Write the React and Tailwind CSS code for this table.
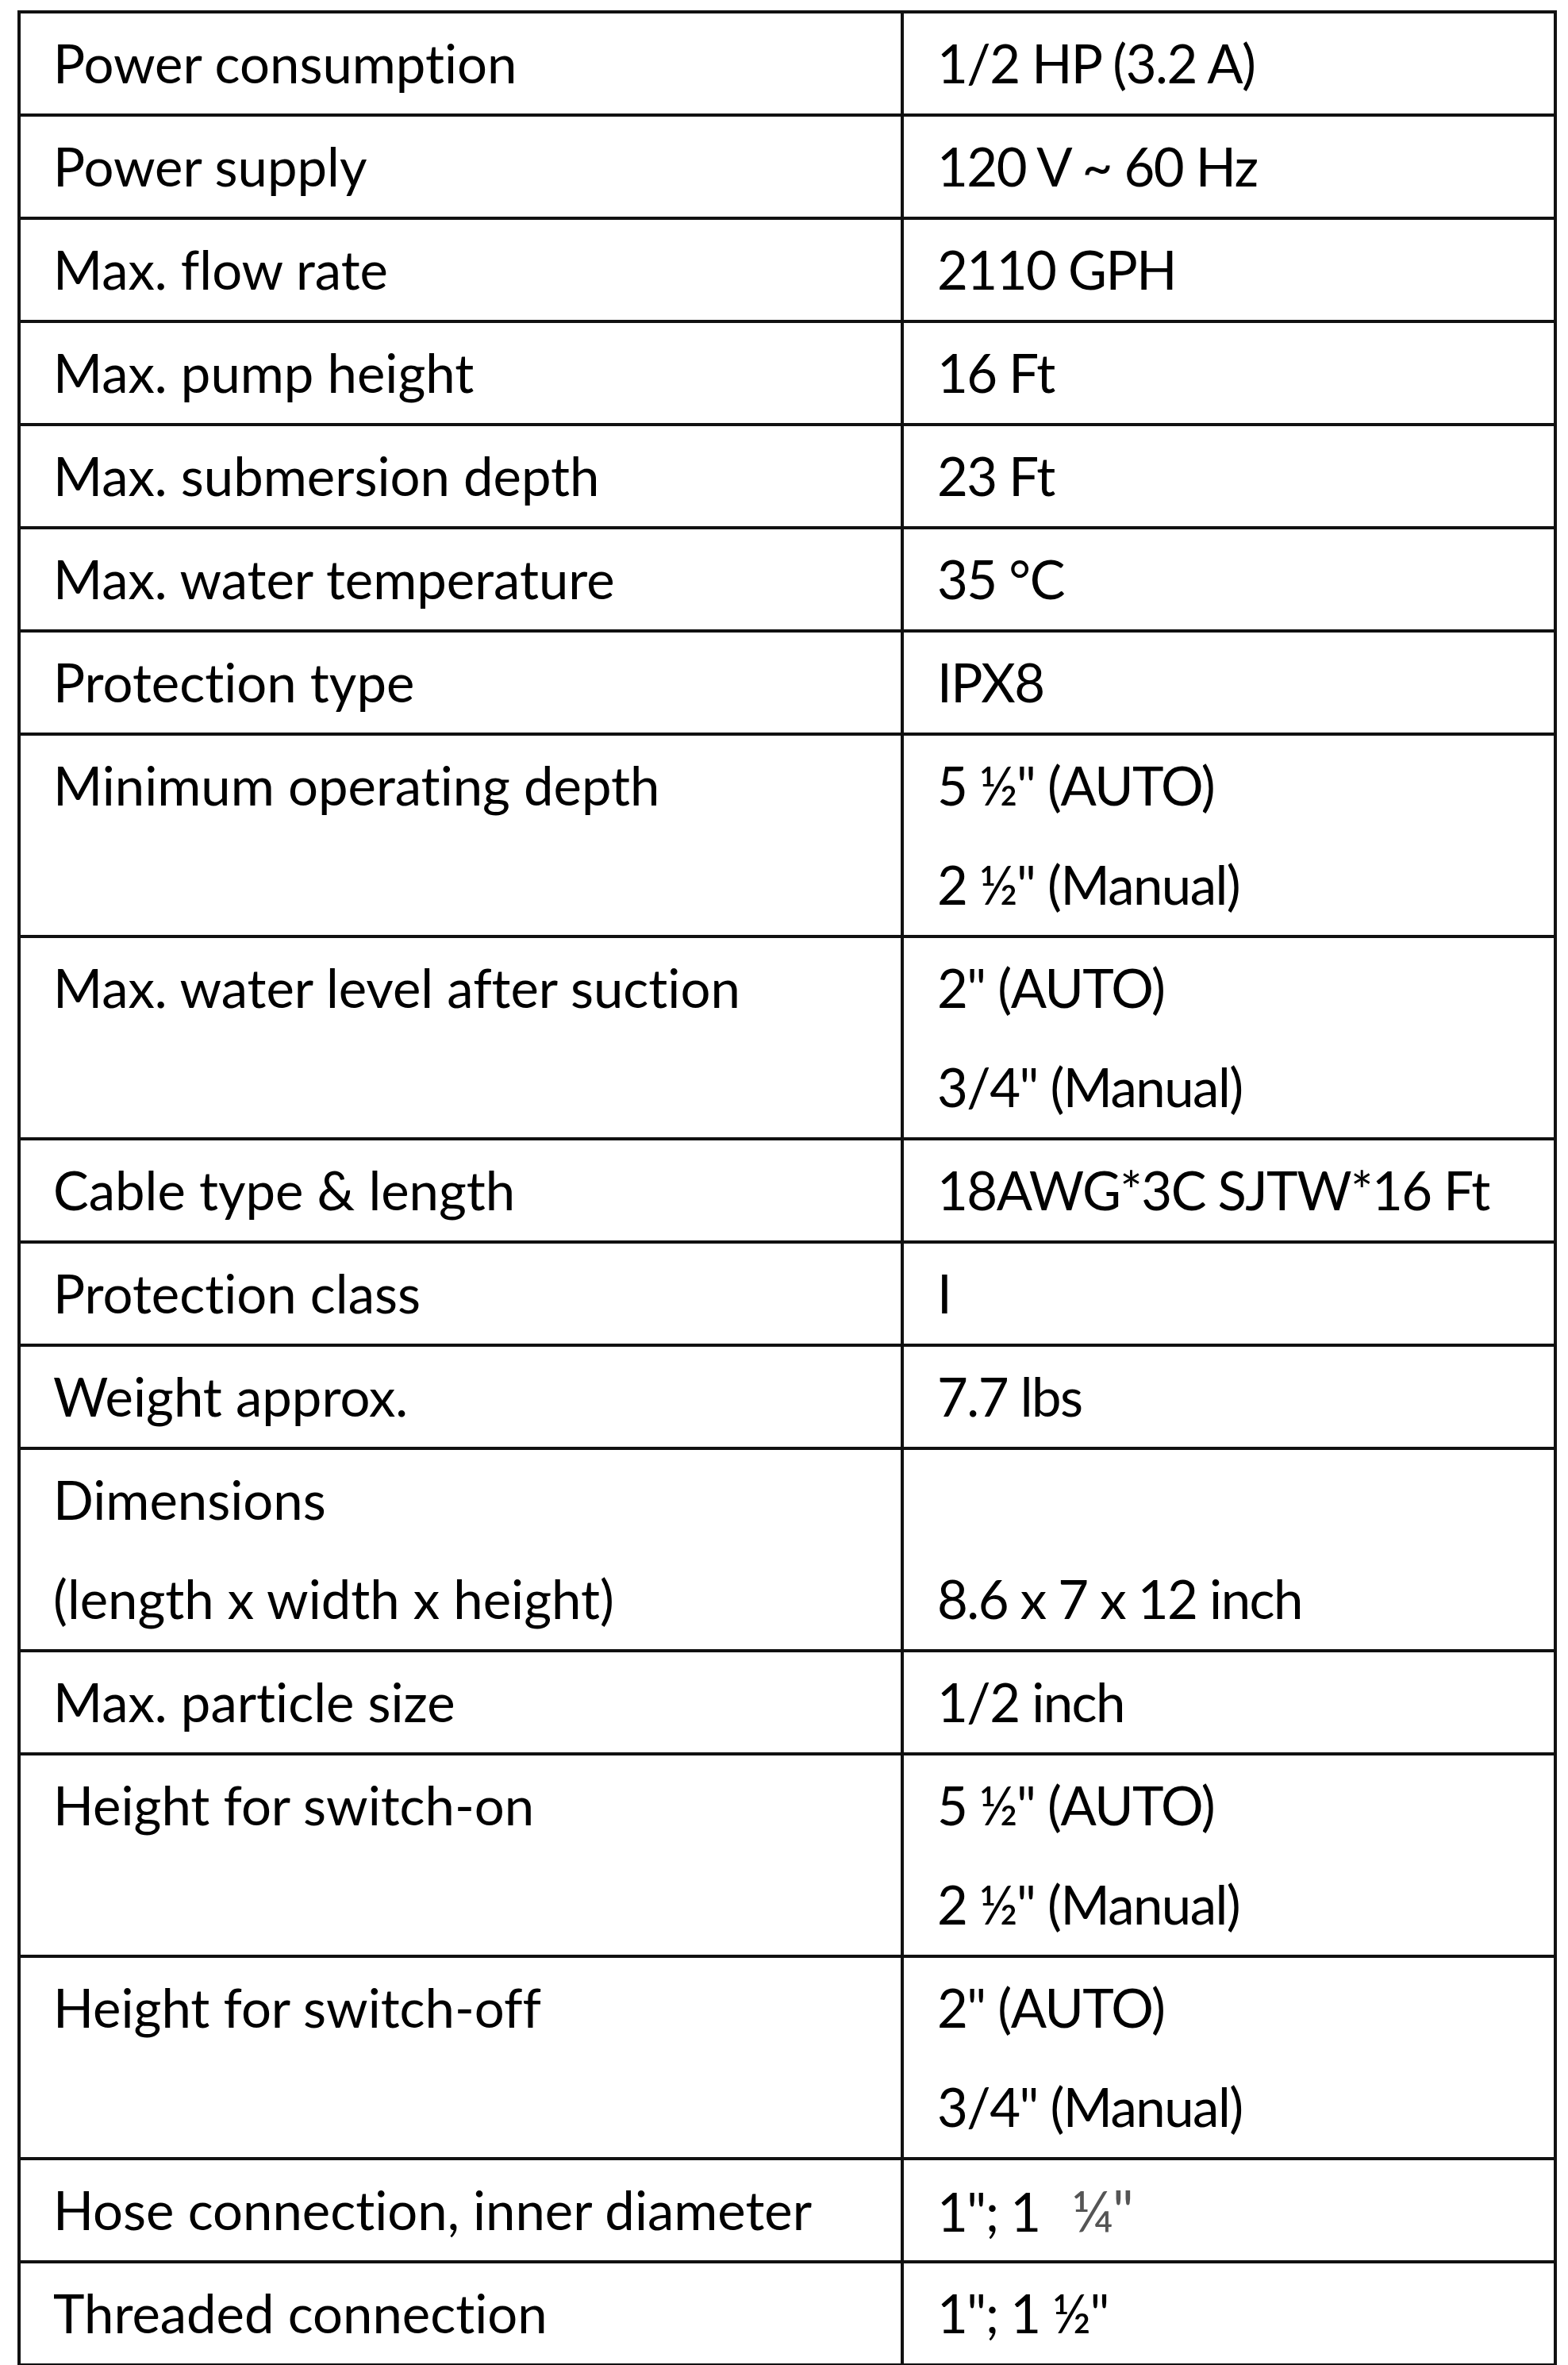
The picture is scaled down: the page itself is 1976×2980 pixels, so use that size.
const rows = [
  { label: ["Power consumption"], value: ["1/2 HP (3.2 A)"] },
  { label: ["Power supply"], value: ["120 V ~ 60 Hz"] },
  { label: ["Max. flow rate"], value: ["2110 GPH"] },
  { label: ["Max. pump height"], value: ["16 Ft"] },
  { label: ["Max. submersion depth"], value: ["23 Ft"] },
  { label: ["Max. water temperature"], value: ["35 °C"] },
  { label: ["Protection type"], value: ["IPX8"] },
  { label: ["Minimum operating depth"], value: ['5 ½" (AUTO)', '2 ½" (Manual)'] },
  { label: ["Max. water level after suction"], value: ['2" (AUTO)', '3/4" (Manual)'] },
  { label: ["Cable type & length"], value: ["18AWG*3C SJTW*16 Ft"] },
  { label: ["Protection class"], value: ["I"] },
  { label: ["Weight approx."], value: ["7.7 lbs"] },
  { label: ["Dimensions", "(length x width x height)"], value: ["", "8.6 x 7 x 12 inch"] },
  { label: ["Max. particle size"], value: ["1/2 inch"] },
  { label: ["Height for switch-on"], value: ['5 ½" (AUTO)', '2 ½" (Manual)'] },
  { label: ["Height for switch-off"], value: ['2" (AUTO)', '3/4" (Manual)'] },
  { label: ["Hose connection, inner diameter"], value: ["hose"] },
  { label: ["Threaded connection"], value: ['1"; 1 ½"'] },
];

const Line = ({ text }) => {
  // the hose row has a pasted-in, greyer quarter glyph
  if (text === "hose") {
    return (
      <div className="h-[125px] whitespace-pre">
        {'1"; 1'}
        <span className="ml-[40px] text-[#555] text-[72px]">¼"</span>
      </div>
    );
  }
  return <div className="h-[125px] whitespace-pre">{text === "" ? "\u00a0" : text}</div>;
};

const App = () => {
  return (
    <div className="min-h-screen bg-white pt-[13px] pl-[22px]">
      <div
        className="w-[1940px] border-4 border-[#111] text-black text-[67px] leading-[125px] [font-variant-ligatures:none]"
        style={{ fontFamily: "Lato, 'Open Sans', sans-serif" }}
      >
        {rows.map((row, i) => (
          <div
            key={i}
            className={i > 0 ? "flex border-t-4 border-[#111]" : "flex"}
          >
            <div className="w-[1113px] shrink-0 border-r-4 border-[#111] pl-[41px] pb-[1px]">
              {row.label.map((t, j) => (
                <Line key={j} text={t} />
              ))}
            </div>
            <div className="flex-1 pl-[42px] pb-[1px] tracking-[-1.5px]">
              {row.value.map((t, j) => (
                <Line key={j} text={t} />
              ))}
            </div>
          </div>
        ))}
      </div>
    </div>
  );
};

export default App;
